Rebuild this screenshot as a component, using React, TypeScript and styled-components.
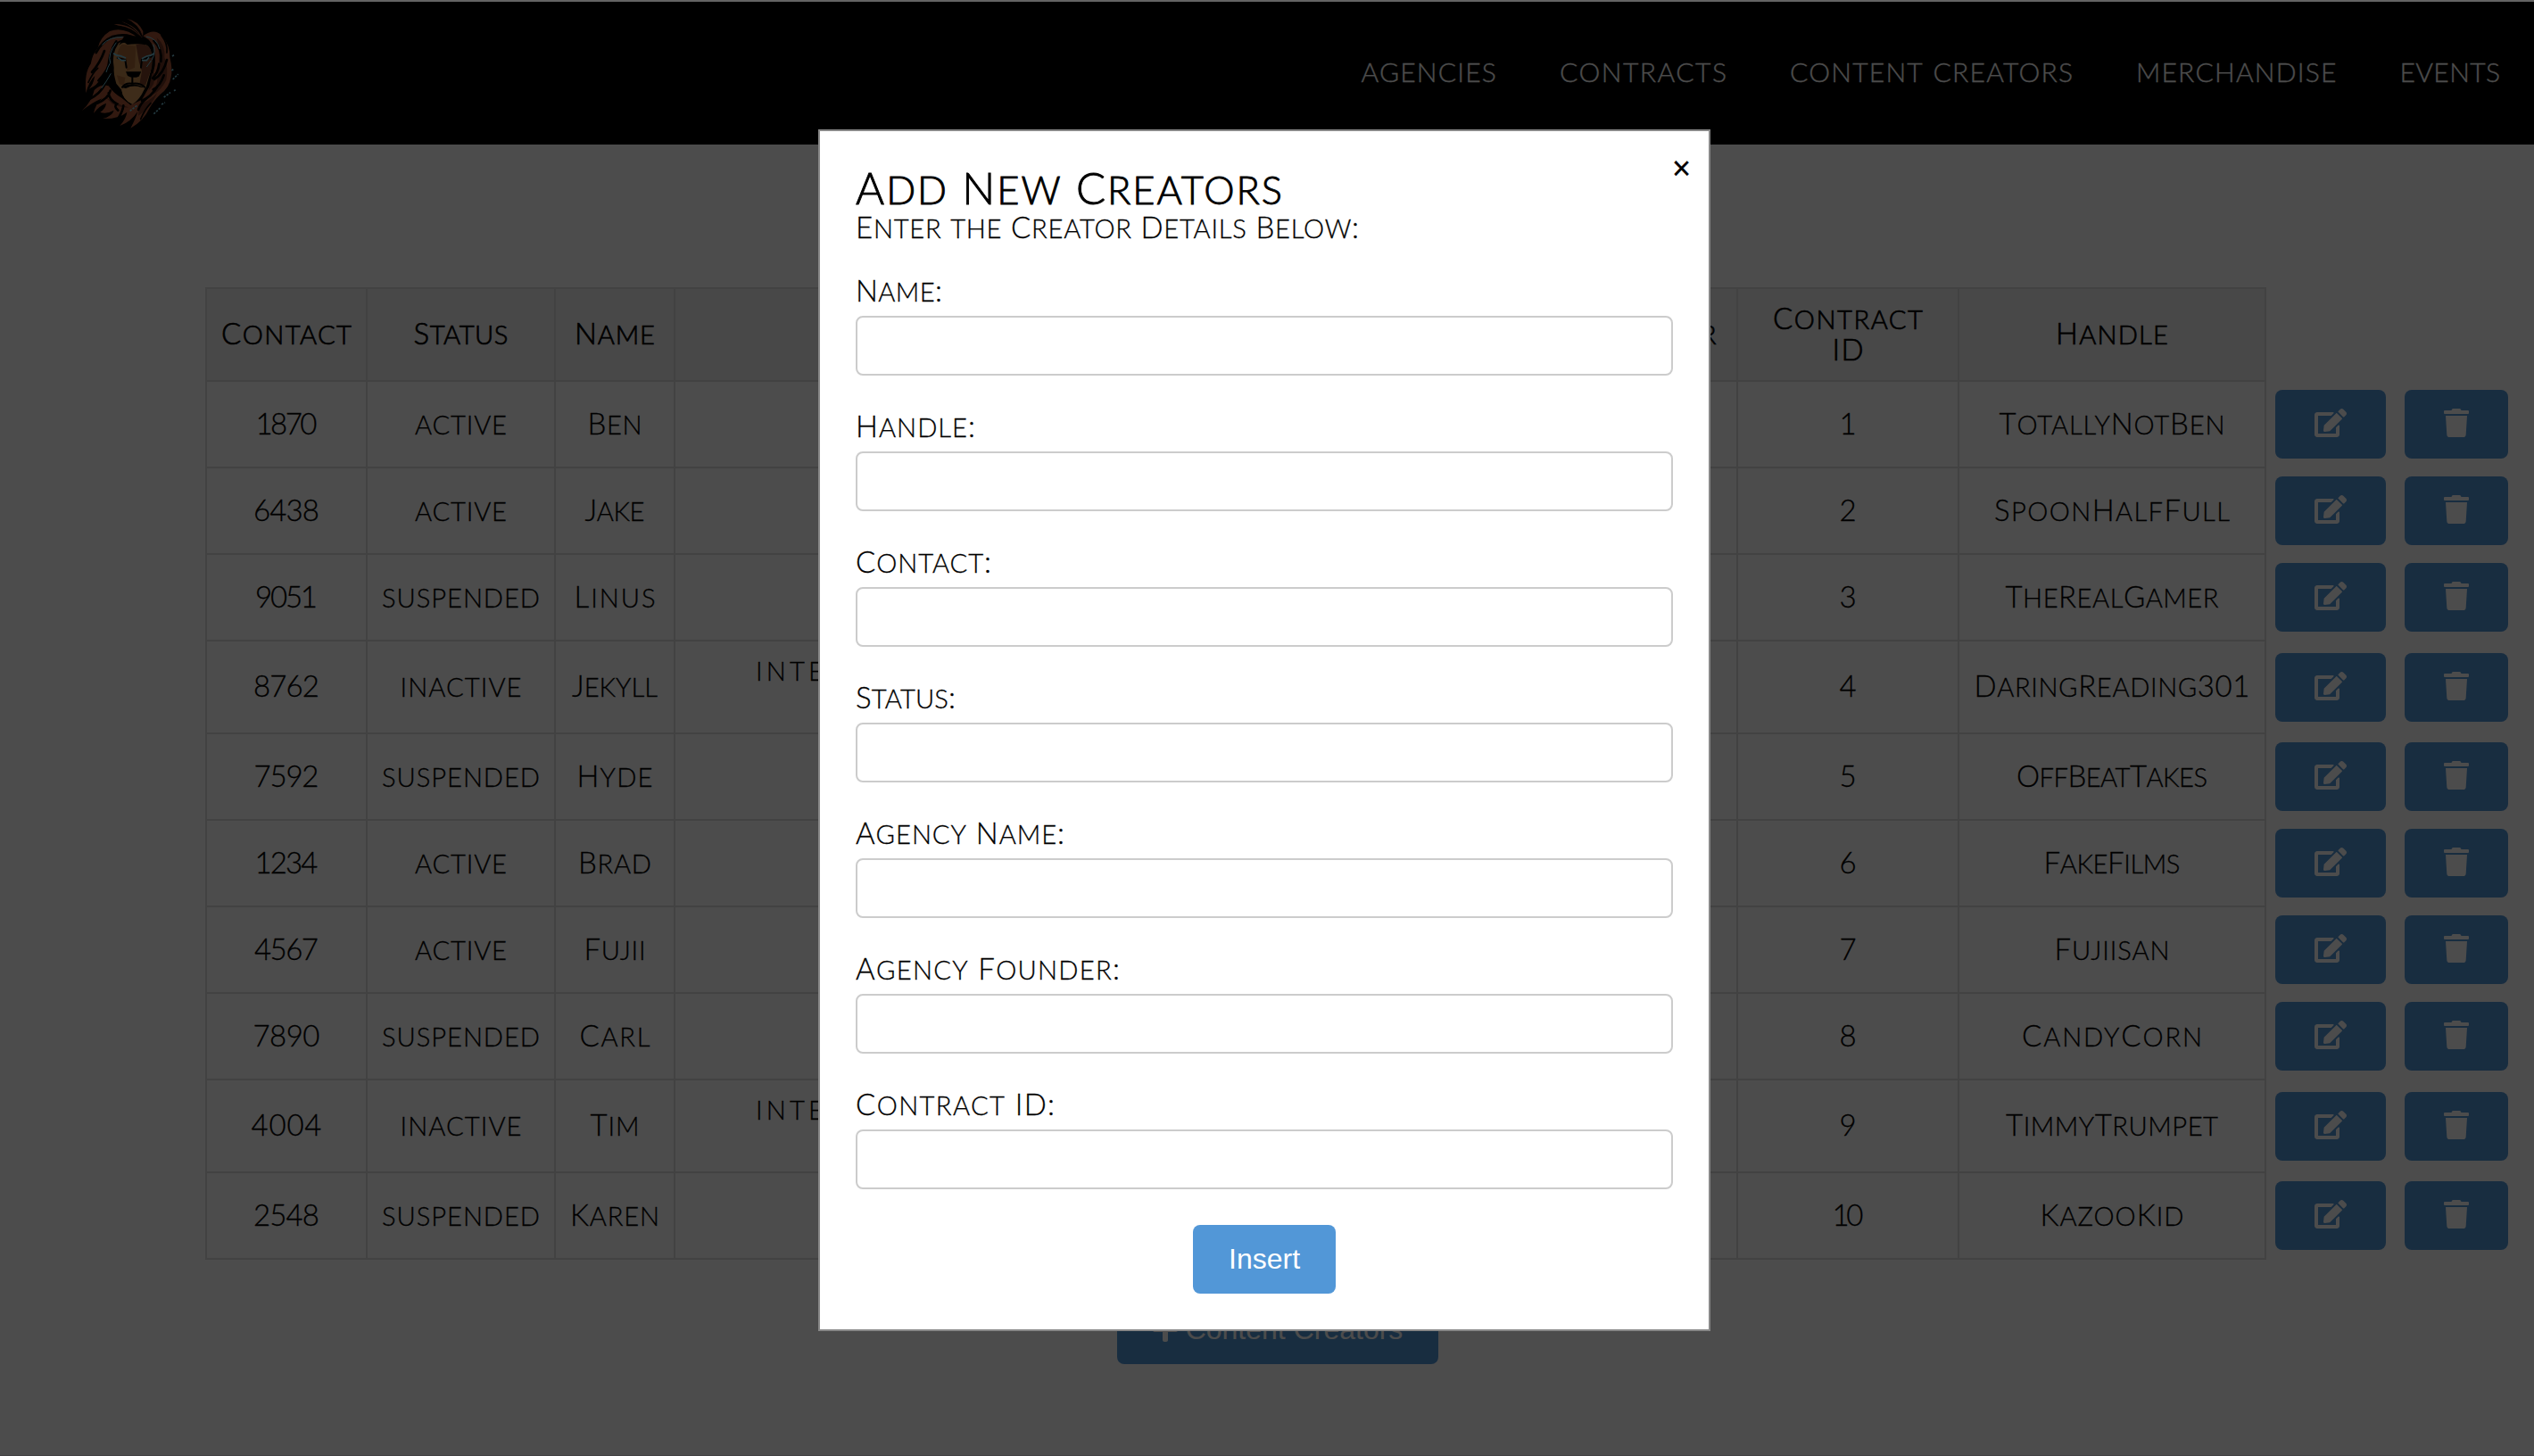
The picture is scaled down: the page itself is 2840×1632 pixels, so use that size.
import React, { useLayoutEffect, useRef, useState } from "react";
import styled, { createGlobalStyle } from "styled-components";
import { FaEdit, FaPlus, FaTrash } from "react-icons/fa";

const GlobalStyle = createGlobalStyle`
  *, *::before, *::after { box-sizing: border-box; }
  html, body { margin: 0; padding: 0; background: #fff; }
  body { overflow: hidden; }
`;

const Frame = styled.div`
  position: relative;
  width: 2840px;
  height: 1632px;
  border-top: 2px solid #646464;
  border-bottom: 1px solid #424143;
  background: #fff;
  color: #000;
  font: 300 33px/35px Lato, "Open Sans", sans-serif;
  -webkit-text-stroke: 0.3px currentColor;
`;

const Header = styled.header`
  display: flex;
  align-items: center;
  justify-content: space-between;
  height: 160px;
  padding: 0 38px 0 90px;
  background: #000;
`;

const Nav = styled.nav`
  display: flex;
  gap: 71px;
  padding-bottom: 6px;
`;

const NavLink = styled.a`
  color: #fff;
  font-size: 34px;
  line-height: 36px;
  white-space: nowrap;
`;

const Main = styled.main`
  padding: 160px 0 0 230px;
`;

const Table = styled.table`
  width: 2600px;
  table-layout: fixed;
  border-collapse: collapse;
  text-align: center;
`;

const Col = styled.col<{ $width: number }>`
  width: ${(p) => p.$width}px;
`;

const Row = styled.tr<{ $tall?: boolean }>`
  height: ${(p) => (p.$tall ? 104 : 97)}px;
`;

const HeadCell = styled.th`
  padding: 0 16px 3px;
  border: 2px solid #ddd;
  background: #f2f2f2;
  font-weight: 300;
  -webkit-text-stroke: 0.7px #000;
`;

const Cell = styled.td`
  padding: 0 0 3px;
  border: 2px solid #ddd;
`;

const AgencyCell = styled(Cell)`
  padding-left: 90px;
  text-align: left;
  vertical-align: top;
`;

const AgencyName = styled.div`
  padding-top: 14px;
`;

const ActionCell = styled.td`
  padding: 0;
`;

const Actions = styled.div`
  display: flex;
  gap: 21px;
  padding-left: 10px;
`;

const Button = styled.button`
  display: inline-flex;
  flex-shrink: 0;
  align-items: center;
  justify-content: center;
  gap: 9px;
  height: 77px;
  padding: 0 40px 2px;
  border: 0;
  border-radius: 8px;
  background: #5297d7;
  color: #fff;
  font: 400 32px/36px "Liberation Sans", Arial, sans-serif;
  white-space: nowrap;
  -webkit-text-stroke: 0;
`;

const IconButton = styled(Button)<{ $width: number }>`
  width: ${(p) => p.$width}px;
  padding: 0 0 3px;
`;

const EditIcon = styled(FaEdit)`
  width: 36px;
  height: 32px;
`;

const TrashIcon = styled(FaTrash)`
  width: 28px;
  height: 32px;
`;

const PlusIcon = styled(FaPlus)`
  width: 28px;
  height: 32px;
`;

const TableFooter = styled.div`
  display: flex;
  padding: 40px 0 0 1022px;
`;

const AddButton = styled(Button)`
  width: 360px;
  padding: 0 0 2px;
`;

const Overlay = styled.div`
  position: absolute;
  inset: 0;
  display: flex;
  align-items: flex-start;
  justify-content: center;
  padding: 143px 6px 0 0;
  background: rgba(0, 0, 0, 0.7);
`;

const Dialog = styled.form`
  position: relative;
  display: flex;
  flex-direction: column;
  width: 1000px;
  height: 1347px;
  padding: 37px 40px 40px;
  border: 2px solid #888;
  background: #fff;
`;

const Title = styled.h2`
  margin: 0;
  font-size: 49px;
  font-weight: 300;
  line-height: 52px;
  -webkit-text-stroke: 0.9px #000;
`;

const Subtitle = styled.p`
  margin: 0 0 35px;
  line-height: 36px;
`;

const Field = styled.label`
  display: flex;
  flex-direction: column;
  gap: 11px;
  margin-bottom: 38px;
  line-height: 36px;
`;

const FieldName = styled.div`
  height: 36px;
`;

const Input = styled.input`
  width: 100%;
  height: 67px;
  padding: 0 20px;
  border: 2px solid #ccc;
  border-radius: 8px;
  background: #fff;
  font: inherit;
`;

const Submit = styled(Button)`
  align-self: center;
  width: 160px;
  margin-top: 2px;
`;

const Close = styled.span`
  position: absolute;
  top: 22px;
  right: 20px;
  font: 400 36px/40px "Liberation Sans", Arial, sans-serif;
`;

const CapsLine = styled.span`
  display: inline-block;
  vertical-align: top;
  white-space: pre;
`;

const Small = styled.span`
  font-size: 0.885em;
  line-height: 0;
  text-transform: uppercase;
`;

/** Small-caps text whose tracking is worked out so the line spans `width` pixels. */
function Caps({ text, width }: { text: string; width?: number }) {
  const ref = useRef<HTMLSpanElement>(null);
  const [tracking, setTracking] = useState(0);
  useLayoutEffect(() => {
    if (!width || !ref.current || text.length < 2) return;
    const natural = ref.current.getBoundingClientRect().width;
    setTracking((width + 3 - natural) / (text.length - 1));
  }, [text, width]);
  const runs = text.match(/[a-z]+|[^a-z]+/g) ?? [];
  return (
    <CapsLine ref={ref} style={tracking ? { letterSpacing: tracking, marginRight: -tracking } : undefined}>
      {runs.map((run, i) => (/[a-z]/.test(run) ? <Small key={i}>{run}</Small> : run))}
    </CapsLine>
  );
}

const LogoSvg = styled.svg`
  width: 117px;
  height: 127px;
`;

function Logo() {
  return (
    <LogoSvg viewBox="93 60 351 381" aria-label="Lion">
      <g fill="#a85536">
        <path d="M206 84Q262 82 296 126Q254 98 206 84ZM232 76Q280 84 302 122Q288 84 250 66Q286 72 304 108Q306 120 300 130Q276 92 232 76Z" />
        <path d="M292 134Q240 90 192 108Q160 128 152 164Q134 184 128 218Q106 246 112 316Q122 276 142 258Q136 290 122 302Q150 292 164 262Q184 240 186 206Q190 170 214 146Q246 124 292 134Z" />
        <path d="M304 124Q340 96 366 122Q396 156 394 196Q404 236 398 262Q392 300 362 320Q338 344 326 366Q306 410 262 434Q280 400 286 378Q264 412 226 426Q248 400 250 380Q222 404 168 402Q200 394 206 374Q180 388 160 380Q178 368 180 350Q154 360 138 384Q144 352 166 334Q132 348 98 376Q132 344 140 306Q164 284 188 292Q208 320 232 332L262 356L300 338L330 286L344 222Q348 160 322 136Z" />
      </g>
      <g fill="#6c3222">
        <path d="M350 130Q380 154 376 196Q390 232 382 272Q366 306 336 322Q358 276 352 240Q366 190 350 130ZM344 250Q346 290 322 308L334 250Z" />
        <path d="M178 330Q216 354 256 364Q226 366 200 352ZM290 354Q330 342 352 314Q330 366 288 392Z" />
      </g>
      <path fill="#c4894f" d="M222 148Q238 138 250 152L300 150Q326 150 332 182Q338 222 324 262L314 296L268 352Q236 340 232 306L214 284Q204 250 206 230Q196 186 222 148Z" />
      <path fill="#7c4229" d="M280 152Q326 142 334 184Q340 226 322 262L312 290L292 286L300 242L290 210Z" />
      <path fill="#a96838" d="M232 152L280 158L276 230L250 242L244 210L216 192Q220 166 232 152ZM216 256L244 264L240 290L224 286Z" />
      <path fill="#d09558" d="M232 306Q270 278 308 304Q292 340 268 354Q236 338 232 306Z" />
      <g fill="none" stroke="#000" strokeLinecap="round">
        <path strokeWidth="8" d="M146 180Q168 140 202 126Q252 112 290 138M132 246Q160 214 174 174M154 274Q188 238 194 204M214 142Q190 176 200 216M124 336Q160 318 176 286M150 350Q188 334 194 308M188 316Q190 338 216 352Q204 360 220 374M238 358Q236 376 222 398M316 334Q296 350 288 372M352 294Q332 328 300 342M384 204Q374 248 342 270M374 256Q362 292 338 304M340 140Q370 170 364 210M358 218Q354 250 336 266" />
        <path strokeWidth="5" d="M224 92Q266 98 294 128M246 78Q286 94 300 124M120 280Q136 246 152 232M330 350Q310 370 296 404M366 122Q388 150 384 180" />
        <path strokeWidth="6" d="M218 198L244 204L248 230M334 192L300 204L297 230M268 250L268 284Q244 280 234 296M268 284Q294 280 310 296" />
      </g>
      <path d="M246 244H298L290 260Q270 268 252 258ZM230 296Q268 276 310 298L296 296Q270 288 246 300ZM222 156Q240 138 252 152Q280 146 312 154L316 138L286 124L240 126Z" />
      <g fill="none" stroke="#78c4d8" strokeWidth="3">
        <path d="M204 182Q212 190 228 191L246 198M342 182Q330 192 316 192L300 200M218 196L232 206H246M324 196L316 206H300" strokeWidth="5" />
        <path d="M166 154Q190 126 236 128M214 146Q184 186 194 214Q186 226 180 246M196 250Q182 276 164 300M314 126Q350 130 360 168M338 152Q348 176 334 204M332 206L316 228" />
        <path strokeDasharray="7 4" strokeWidth="5" d="M402 192L410 187M400 240L408 235M404 270L422 252M374 330L396 314M408 308L413 305M340 386L362 366M366 354L378 348M260 376L286 356" />
      </g>
    </LogoSvg>
  );
}

const navItems = [
  { text: "agencies", width: 148.5 },
  { text: "contracts", width: 184 },
  { text: "content creators", width: 314 },
  { text: "merchandise", width: 221.5 },
  { text: "events", width: 109.5 },
];

type Measured = [text: string, width?: number];

interface Creator {
  contact: Measured;
  status: Measured;
  name: Measured;
  agency?: Measured;
  contractId: Measured;
  handle: Measured;
}

const active: Measured = ["active", 100];
const suspended: Measured = ["suspended", 174];
const inactive: Measured = ["inactive", 133];
const international: Measured = ["inte", 73];

const creators: Creator[] = [
  { contact: ["1870", 66], status: active, name: ["Ben", 58], contractId: ["1"], handle: ["TotallyNotBen", 250] },
  { contact: ["6438", 71], status: active, name: ["Jake", 64], contractId: ["2"], handle: ["SpoonHalfFull", 261] },
  { contact: ["9051", 67], status: suspended, name: ["Linus", 88], contractId: ["3"], handle: ["TheRealGamer", 236] },
  { contact: ["8762", 71], status: inactive, name: ["Jekyll", 93], agency: international, contractId: ["4"], handle: ["DaringReading301", 306] },
  { contact: ["7592", 70], status: suspended, name: ["Hyde", 82], contractId: ["5"], handle: ["OffBeatTakes", 211] },
  { contact: ["1234", 68], status: active, name: ["Brad", 79], contractId: ["6"], handle: ["FakeFilms", 150] },
  { contact: ["4567", 69], status: active, name: ["Fujii", 66], contractId: ["7"], handle: ["Fujiisan", 126] },
  { contact: ["7890", 72], status: suspended, name: ["Carl", 76], contractId: ["8"], handle: ["CandyCorn", 199] },
  { contact: ["4004", 76], status: inactive, name: ["Tim", 52], agency: international, contractId: ["9"], handle: ["TimmyTrumpet", 235] },
  { contact: ["2548", 71], status: suspended, name: ["Karen", 97], contractId: ["10", 32], handle: ["KazooKid", 158] },
];

const columns = [180, 211, 134, 846, 345, 248, 344, 291];

const fields: Measured[] = [
  ["Name:", 94],
  ["Handle:", 131],
  ["Contact:", 149],
  ["Status:", 109],
  ["Agency Name:", 231],
  ["Agency Founder:", 293],
  ["Contract ID:", 220],
];

const Text = ({ value }: { value: Measured }) => <Caps text={value[0]} width={value[1]} />;

export default function App() {
  return (
    <>
      <GlobalStyle />
      <Frame>
        <Header>
          <Logo />
          <Nav>
            {navItems.map((item) => (
              <NavLink key={item.text}>
                <Caps text={item.text} width={item.width} />
              </NavLink>
            ))}
          </Nav>
        </Header>
        <Main>
          <Table>
            <colgroup>
              {columns.map((width, i) => (
                <Col key={i} $width={width} />
              ))}
            </colgroup>
            <thead>
              <Row $tall>
                <HeadCell><Caps text="Contact" width={143} /></HeadCell>
                <HeadCell><Caps text="Status" width={103} /></HeadCell>
                <HeadCell><Caps text="Name" width={87} /></HeadCell>
                <HeadCell />
                <HeadCell><Caps text="Agency Founder" width={295} /></HeadCell>
                <HeadCell>
                  <Caps text="Contract" width={165} />
                  <br />
                  <Caps text="ID" width={32} />
                </HeadCell>
                <HeadCell><Caps text="Handle" width={123} /></HeadCell>
                <ActionCell />
              </Row>
            </thead>
            <tbody>
              {creators.map((c) => (
                <Row key={c.contact[0]} $tall={!!c.agency}>
                  <Cell><Text value={c.contact} /></Cell>
                  <Cell><Text value={c.status} /></Cell>
                  <Cell><Text value={c.name} /></Cell>
                  <AgencyCell>
                    {c.agency && (
                      <AgencyName>
                        <Text value={c.agency} />
                      </AgencyName>
                    )}
                  </AgencyCell>
                  <Cell />
                  <Cell><Text value={c.contractId} /></Cell>
                  <Cell><Text value={c.handle} /></Cell>
                  <ActionCell>
                    <Actions>
                      <IconButton $width={124} type="button"><EditIcon /></IconButton>
                      <IconButton $width={116} type="button"><TrashIcon /></IconButton>
                    </Actions>
                  </ActionCell>
                </Row>
              ))}
            </tbody>
          </Table>
          <TableFooter>
            <AddButton type="button">
              <PlusIcon />
              Content Creators
            </AddButton>
          </TableFooter>
        </Main>
        <Overlay>
          <Dialog>
            <Close>×</Close>
            <Title><Caps text="Add New Creators" width={475} /></Title>
            <Subtitle><Caps text="Enter the Creator Details Below:" width={561} /></Subtitle>
            {fields.map((field) => (
              <Field key={field[0]}>
                <FieldName><Text value={field} /></FieldName>
                <Input type="text" />
              </Field>
            ))}
            <Submit type="button">Insert</Submit>
          </Dialog>
        </Overlay>
      </Frame>
    </>
  );
}
